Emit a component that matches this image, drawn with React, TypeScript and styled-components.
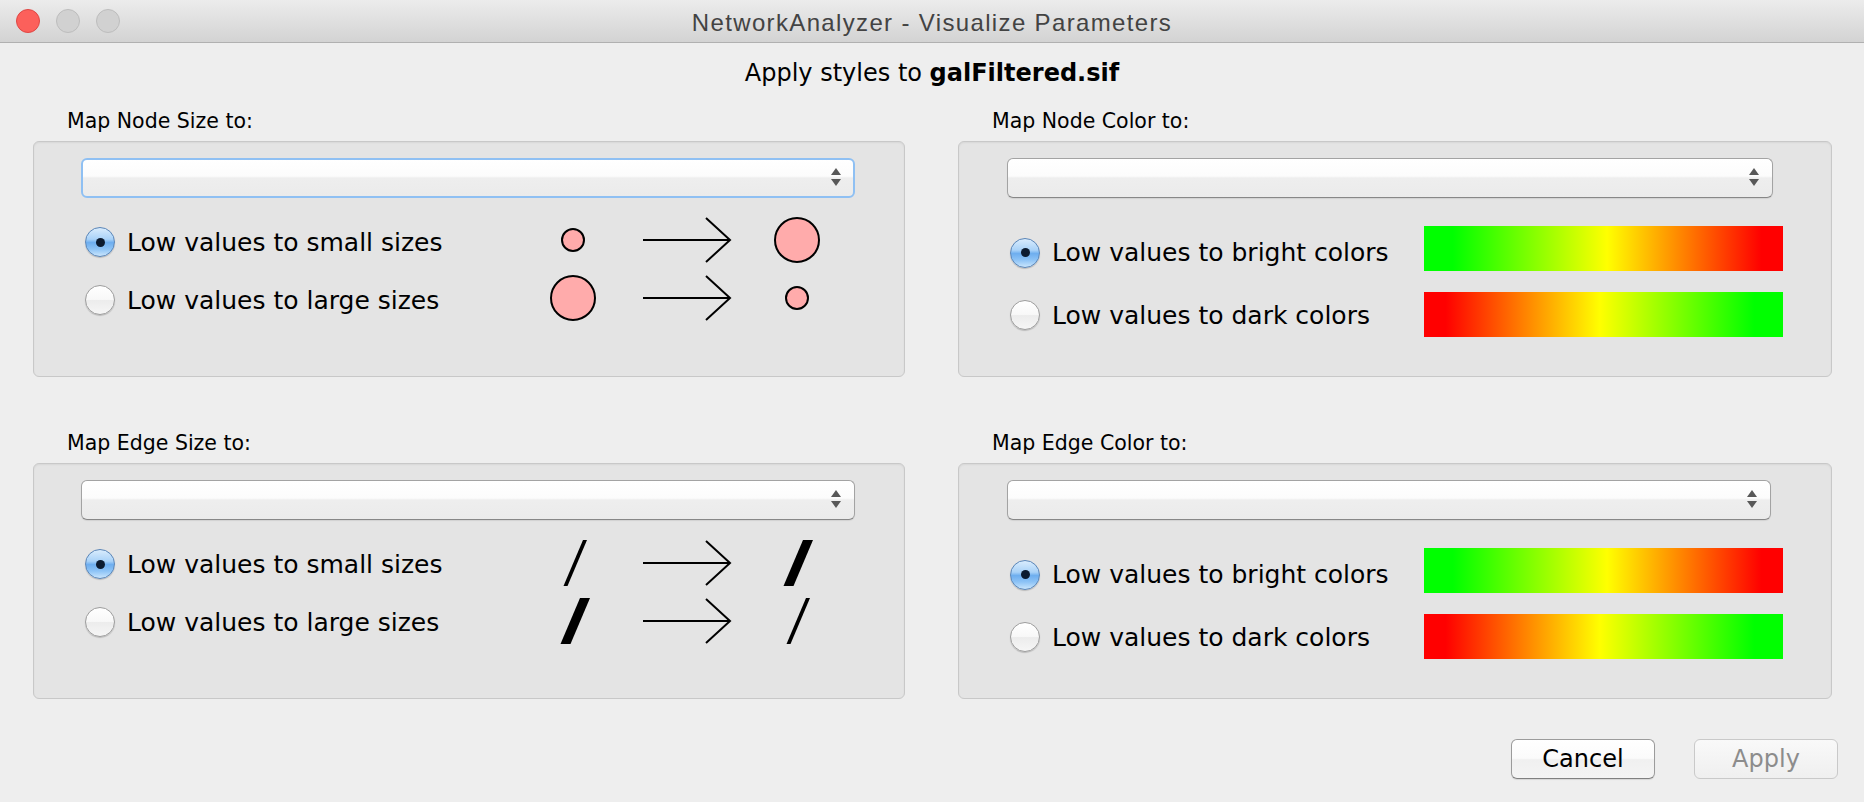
import React from 'react'
import styled, { createGlobalStyle, css } from 'styled-components'

const GlobalStyle = createGlobalStyle`
  html, body {
    margin: 0;
    padding: 0;
  }
  body {
    background: #eeeeee;
    font-family: 'DejaVu Sans', 'Liberation Sans', sans-serif;
    color: #000;
  }
`

const Window = styled.div`
  width: 1864px;
  height: 802px;
  display: flex;
  flex-direction: column;
  background: #eeeeee;
  overflow: hidden;
`

const TitleBar = styled.div`
  height: 42px;
  flex-shrink: 0;
  display: grid;
  grid-template-columns: 1fr auto 1fr;
  align-items: center;
  background: linear-gradient(#ececec, #d3d3d3);
  border-bottom: 1px solid #b0b0b0;
`

const Lights = styled.div`
  display: flex;
  gap: 16px;
  padding-left: 16px;
`

const Light = styled.span<{ $red?: boolean }>`
  width: 24px;
  height: 24px;
  box-sizing: border-box;
  border-radius: 50%;
  background: ${(p) => (p.$red ? '#fc605b' : '#d1d1d1')};
  border: 1px solid ${(p) => (p.$red ? '#df4744' : '#bdbdbd')};
`

const WindowTitle = styled.div`
  font-family: 'Liberation Sans', Arial, sans-serif;
  font-size: 24px;
  letter-spacing: 1.35px;
  color: #434343;
  padding-top: 3px;
`

const Heading = styled.div`
  margin-top: 16px;
  font-size: 24px;
  line-height: 28px;
  text-align: center;

  b {
    font-weight: bold;
  }
`

const Grid = styled.div`
  margin-top: 22px;
  padding: 0 32px 0 33px;
  display: grid;
  grid-template-columns: 872px 874px;
  column-gap: 53px;
  row-gap: 54px;
`

const Section = styled.div`
  display: flex;
  flex-direction: column;
`

const Label = styled.div`
  font-size: 20.5px;
  line-height: 24px;
  padding-left: 34px;
  margin-bottom: 8px;
`

const Box = styled.div`
  height: 236px;
  box-sizing: border-box;
  border: 1px solid #c8c8c8;
  border-radius: 6px;
  background: #e4e4e4;
  box-shadow: inset 0 1px 2px rgba(0, 0, 0, 0.06);
  padding-top: 16px;
`

const Combo = styled.div<{ $left: number; $right: number; $focused?: boolean }>`
  height: 40px;
  box-sizing: border-box;
  margin: 0 ${(p) => p.$right}px 0 ${(p) => p.$left}px;
  border-radius: 6px;
  background: linear-gradient(#ffffff 0%, #fcfcfc 45%, #eeeeee 50%, #ebebeb 100%);
  display: flex;
  align-items: center;
  justify-content: flex-end;
  padding-right: 13px;
  ${(p) =>
    p.$focused
      ? css`
          border: 2px solid #8fc0f3;
          padding-right: 12px;
        `
      : css`
          border: 1px solid #a3a3a3;
          border-bottom-color: #878787;
          box-shadow: 0 1px 1px rgba(0, 0, 0, 0.08);
        `}
`

const Rows = styled.div<{ $top: number; $gap: number }>`
  margin-top: ${(p) => p.$top}px;
  display: flex;
  flex-direction: column;
  gap: ${(p) => p.$gap}px;
`

const Row = styled.div<{ $height: number }>`
  height: ${(p) => p.$height}px;
  display: flex;
  align-items: center;
`

const Choice = styled.label<{ $shift?: number }>`
  flex: 1;
  display: flex;
  align-items: center;
  gap: 12px;
  padding-left: 51px;
  padding-top: ${(p) => p.$shift ?? 0}px;
  font-size: 25px;
  white-space: nowrap;
`

const Radio = styled.span<{ $checked?: boolean }>`
  width: 30px;
  height: 30px;
  flex-shrink: 0;
  box-sizing: border-box;
  border-radius: 50%;
  display: flex;
  align-items: center;
  justify-content: center;
  box-shadow: 0 1px 1px rgba(0, 0, 0, 0.18);
  ${(p) =>
    p.$checked
      ? css`
          border: 1px solid #5b86b8;
          background: linear-gradient(#d9ecfd 0%, #a9d2f8 40%, #6eaeef 52%, #8dc3f6 75%, #c9e5fc 100%);
          &::after {
            content: '';
            width: 9px;
            height: 9px;
            border-radius: 50%;
            background: #0c1b30;
          }
        `
      : css`
          border: 1px solid #9d9d9d;
          background: linear-gradient(#ffffff 0%, #f8f8f8 48%, #ececec 52%, #f6f6f6 100%);
        `}
`

const Illustration = styled.svg`
  flex-shrink: 0;
  margin-right: 74px;
`

const Ramp = styled.div<{ $reverse?: boolean }>`
  width: 359px;
  height: 45px;
  flex-shrink: 0;
  margin-right: 48px;
  background: linear-gradient(
    ${(p) => (p.$reverse ? 'to left' : 'to right')},
    #00ff00 0%,
    #00ff00 8%,
    #ffff00 51%,
    #ff0000 94%,
    #ff0000 100%
  );
`

const Footer = styled.div`
  margin-top: 40px;
  display: flex;
  justify-content: flex-end;
  gap: 39px;
  padding-right: 26px;
`

const Button = styled.button`
  width: 144px;
  height: 40px;
  box-sizing: border-box;
  border-radius: 6px;
  font-family: 'DejaVu Sans', sans-serif;
  font-size: 24px;
  padding: 0;
  color: #000;
  border: 1px solid #9b9b9b;
  border-bottom-color: #808080;
  background: linear-gradient(#ffffff 0%, #fbfbfb 48%, #f0f0f0 52%, #f4f4f4 100%);
  box-shadow: 0 1px 1px rgba(0, 0, 0, 0.1);

  &:disabled {
    color: #8c8c8c;
    border-color: #c9c9c9;
    background: linear-gradient(#f9f9f9, #efefef);
    box-shadow: none;
  }
`

const ComboArrows = () => (
  <svg width="10" height="20" viewBox="0 0 10 20">
    <polygon points="5,0 10,7 0,7" fill="#585858" />
    <polygon points="0,11 10,11 5,18" fill="#585858" />
  </svg>
)

const Arrow = ({ y }: { y: number }) => (
  <g stroke="#000" strokeWidth="2" fill="none">
    <line x1="103" y1={y} x2="190" y2={y} />
    <polyline points={`166,${y - 22} 190,${y} 166,${y + 22}`} />
  </g>
)

const NodeSizes = ({ from, to }: { from: number; to: number }) => (
  <Illustration width="290" height="58" viewBox="0 0 290 58">
    <circle cx="33" cy="27" r={from} fill="#ffabab" stroke="#000" strokeWidth="2" />
    <Arrow y={27} />
    <circle cx="257" cy="27" r={to} fill="#ffabab" stroke="#000" strokeWidth="2" />
  </Illustration>
)

const slash = (x: number, w: number) => {
  const b = x - 19.5
  return `${x - w / 2},5 ${x + w / 2},5 ${b + w / 2},51 ${b - w / 2},51`
}

const EdgeSizes = ({ from, to }: { from: number; to: number }) => (
  <Illustration width="290" height="58" viewBox="0 0 290 58">
    <polygon points={slash(45, from)} fill="#000" />
    <Arrow y={28} />
    <polygon points={slash(268, to)} fill="#000" />
  </Illustration>
)

type Kind = 'node' | 'edge' | 'color'

const sections: { label: string; kind: Kind; left: number; right: number; focused?: boolean }[] = [
  { label: 'Map Node Size to:', kind: 'node', left: 47, right: 49, focused: true },
  { label: 'Map Node Color to:', kind: 'color', left: 48, right: 58 },
  { label: 'Map Edge Size to:', kind: 'edge', left: 47, right: 49 },
  { label: 'Map Edge Color to:', kind: 'color', left: 48, right: 60 },
]

const SizeRows = ({ kind }: { kind: Kind }) => {
  const Picture = kind === 'node' ? NodeSizes : EdgeSizes
  const small = kind === 'node' ? 11 : 4
  const large = kind === 'node' ? 22 : 10
  return (
    <Rows $top={15} $gap={0}>
      <Row $height={58}>
        <Choice>
          <Radio $checked />
          Low values to small sizes
        </Choice>
        <Picture from={small} to={large} />
      </Row>
      <Row $height={58}>
        <Choice>
          <Radio />
          Low values to large sizes
        </Choice>
        <Picture from={large} to={small} />
      </Row>
    </Rows>
  )
}

const ColorRows = () => (
  <Rows $top={28} $gap={21}>
    <Row $height={45}>
      <Choice $shift={8}>
        <Radio $checked />
        Low values to bright colors
      </Choice>
      <Ramp />
    </Row>
    <Row $height={45}>
      <Choice $shift={1}>
        <Radio />
        Low values to dark colors
      </Choice>
      <Ramp $reverse />
    </Row>
  </Rows>
)

const App = () => {
  return (
    <Window>
      <GlobalStyle />
      <TitleBar>
        <Lights>
          <Light $red />
          <Light />
          <Light />
        </Lights>
        <WindowTitle>NetworkAnalyzer - Visualize Parameters</WindowTitle>
        <div />
      </TitleBar>
      <Heading>
        Apply styles to <b>galFiltered.sif</b>
      </Heading>
      <Grid>
        {sections.map((s, key) => (
          <Section key={'section-' + key}>
            <Label>{s.label}</Label>
            <Box>
              <Combo $left={s.left} $right={s.right} $focused={s.focused}>
                <ComboArrows />
              </Combo>
              {s.kind === 'color' ? <ColorRows /> : <SizeRows kind={s.kind} />}
            </Box>
          </Section>
        ))}
      </Grid>
      <Footer>
        <Button>Cancel</Button>
        <Button disabled>Apply</Button>
      </Footer>
    </Window>
  )
}

export default App
